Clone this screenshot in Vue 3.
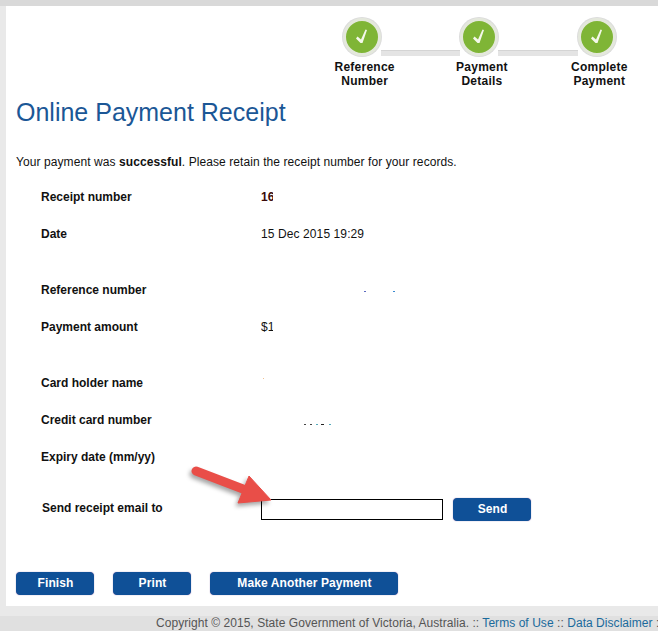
<script setup>
const steps = [
  { id: 'ref', line1: 'Reference', line2: 'Number' },
  { id: 'pay', line1: 'Payment', line2: 'Details' },
  { id: 'done', line1: 'Complete', line2: 'Payment' }
]

const firstGroup = [
  { label: 'Receipt number', value: '16', clipped: true },
  { label: 'Date', value: '15 Dec 2015 19:29' }
]
const secondGroup = [
  { label: 'Reference number', specks: 'ref' },
  { label: 'Payment amount', value: '$1', clipped: true, thin: true }
]
const thirdGroup = [
  { label: 'Card holder name', specks: 'name' },
  { label: 'Credit card number', specks: 'card' },
  { label: 'Expiry date (mm/yy)' }
]
const groups = [firstGroup, secondGroup, thirdGroup]
</script>

<template>
  <div class="page">
    <main class="panel">
      <div class="steps">
        <div class="step-icons">
          <template v-for="(step, i) in steps" :key="step.id">
            <div class="step-circle">
              <svg class="tick" width="32" height="32" viewBox="0 0 32 32">
                <path d="M21 9 L16.5 22 L14.5 22 L10 17.5 L11.5 15.5 L15 18.5 L19.5 8.5 Z" fill="#f4f8ea" />
              </svg>
            </div>
            <div v-if="i < steps.length - 1" class="step-bar"></div>
          </template>
        </div>
        <div class="step-labels">
          <div v-for="step in steps" :key="step.id" class="step-label">
            {{ step.line1 }}<br />{{ step.line2 }}
          </div>
        </div>
      </div>

      <h1 class="title">Online Payment Receipt</h1>
      <p class="intro">
        Your payment was <strong>successful</strong>. Please retain the receipt number for your records.
      </p>

      <div v-for="(group, g) in groups" :key="g" class="group">
        <div v-for="row in group" :key="row.label" class="row">
          <div class="label">{{ row.label }}</div>
          <div class="value" :class="{ clip: row.clipped, strong: row.clipped && !row.thin }">
            <span v-if="row.value">{{ row.value }}</span>
            <span v-if="row.specks === 'ref'" class="specks specks-ref"><i></i><i></i></span>
            <span v-if="row.specks === 'name'" class="specks specks-name"><i></i></span>
            <span v-if="row.specks === 'card'" class="specks specks-card"><i></i><i></i><i></i><i></i><i></i></span>
          </div>
        </div>
      </div>

      <div class="email-row">
        <label class="label email-label">Send receipt email to</label>
        <input class="email-input" type="text" />
        <button class="btn btn-send">Send</button>
        <svg class="arrow" width="100" height="50" viewBox="0 0 100 50">
          <path d="M11 9 L58 27" stroke="#e94e48" stroke-width="9" stroke-linecap="round" fill="none" />
          <path d="M64 14 L86 38 L53 41 Z" fill="#e94e48" stroke="#e94e48" stroke-width="1" stroke-linejoin="round" />
        </svg>
      </div>

      <div class="actions">
        <button class="btn btn-finish">Finish</button>
        <button class="btn btn-print">Print</button>
        <button class="btn btn-another">Make Another Payment</button>
      </div>
    </main>

    <footer class="footer">
      Copyright © 2015, State Government of Victoria, Australia. ::
      <a href="#">Terms of Use</a> ::
      <a href="#">Data Disclaimer</a> ::
    </footer>
  </div>
</template>

<style>
html, body {
  margin: 0;
  background: #e9e9e9;
  overflow: hidden;
}
</style>

<style scoped>
.page {
  width: 658px;
  height: 631px;
  overflow: hidden;
  background: #e9e9e9;
  border-top: 6px solid #d9d9d9;
  box-sizing: border-box;
  font-family: "Liberation Sans", Arial, sans-serif;
  font-size: 12px;
  color: #111;
}

.panel {
  position: relative;
  margin-left: 6px;
  height: 600px;
  background: #fff;
  padding: 12px 0 0 10px;
  box-sizing: border-box;
}

.steps {
  height: 72px;
}

.step-icons {
  display: flex;
  align-items: flex-start;
  margin-left: 327px;
}

.step-circle {
  flex: none;
  width: 32px;
  height: 32px;
  border: 3px solid #e4e8dc;
  border-radius: 50%;
  background: #7fb536;
  box-shadow: 0 0 0 1px #dcdcdc;
}

.tick {
  display: block;
}

.step-bar {
  flex: none;
  width: 79px;
  height: 5px;
  margin-top: 32px;
  background: #e4e4e4;
  border-top: 1px solid #d4d4d4;
}

.step-bar:nth-child(4) {
  width: 80px;
}

.step-labels {
  display: flex;
  margin-left: 290px;
  margin-top: 4px;
}

.step-label {
  width: 118px;
  text-align: center;
  font-weight: bold;
  line-height: 14px;
  letter-spacing: 0.25px;
}

.title {
  margin: 7px 0 0;
  font-size: 25px;
  line-height: 30px;
  font-weight: normal;
  color: #1b5796;
}

.intro {
  margin: 28px 0 0;
  line-height: 14px;
  letter-spacing: 0.08px;
}

.group {
  padding-left: 25px;
  margin-top: 21px;
}

.group + .group {
  margin-top: 42px;
}

.row {
  display: flex;
  height: 14px;
  line-height: 14px;
  margin-bottom: 23px;
}

.row:last-child {
  margin-bottom: 0;
}

.label {
  width: 220px;
  flex: none;
  font-weight: bold;
}

.value {
  position: relative;
  flex: 1;
  letter-spacing: 0.1px;
}

.value.clip {
  flex: none;
  width: 12px;
  overflow: hidden;
  white-space: nowrap;
}

.value.strong {
  font-weight: bold;
  color: #3a0a0a;
}

.specks i {
  display: block;
  position: absolute;
  height: 1px;
  width: 2px;
}

.specks-ref i:nth-child(1) { left: 103px; top: 8px; background: #5a6ac0; }
.specks-ref i:nth-child(2) { left: 132px; top: 8px; background: #3a8ad0; }
.specks-name i { left: 2px; top: 2px; width: 1px; background: #f0c090; }
.specks-card i { top: 11px; background: #444; }
.specks-card i:nth-child(1) { left: 43px; }
.specks-card i:nth-child(2) { left: 49px; }
.specks-card i:nth-child(3) { left: 55px; background: #5ab; }
.specks-card i:nth-child(4) { left: 60px; width: 3px; background: #222; }
.specks-card i:nth-child(5) { left: 68px; background: #5ab; }

.email-row {
  position: relative;
  display: flex;
  align-items: center;
  margin-top: 34px;
  padding-left: 26px;
  height: 23px;
}

.email-label {
  width: 219px;
  align-self: flex-start;
  margin-top: 3px;
  line-height: 14px;
}

.email-input {
  width: 182px;
  height: 21px;
  box-sizing: border-box;
  border: 1px solid #000;
  background: #fff;
  padding: 0;
  outline: none;
}

.btn {
  width: 78px;
  height: 23px;
  padding: 0 0 2px 1px;
  border: 1px solid #0f5097;
  border-radius: 4px;
  background: #0f5097;
  color: #fff;
  font-family: inherit;
  font-size: 12px;
  font-weight: bold;
  letter-spacing: 0.1px;
  box-shadow: 0 0 1px #7a5aa0;
  box-sizing: border-box;
}

.btn-send {
  margin-left: 10px;
}

.arrow {
  position: absolute;
  left: 169px;
  top: -36px;
  filter: drop-shadow(-2px 3px 2px rgba(0, 0, 0, 0.35));
}

.actions {
  display: flex;
  gap: 19px;
  margin-top: 51px;
}

.btn-another {
  width: 188px;
}

.footer {
  margin-top: 10px;
  height: 15px;
  background: #e0e0e0;
  padding-left: 156px;
  line-height: 14px;
  white-space: nowrap;
  color: #555;
  letter-spacing: 0.05px;
}

.footer a {
  color: #1a6a9c;
  text-decoration: none;
}
</style>
